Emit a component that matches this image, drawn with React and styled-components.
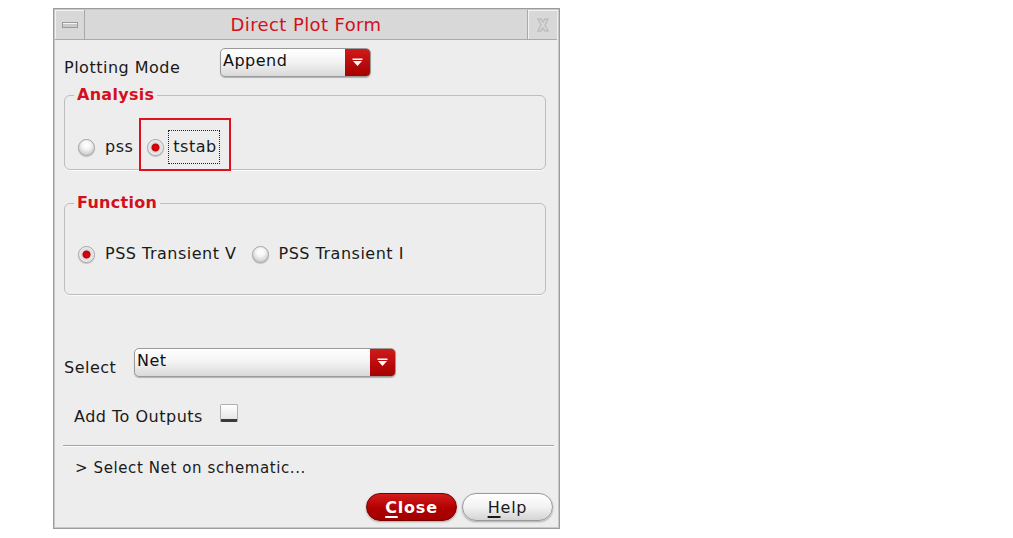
import React from "react";
import styled, { createGlobalStyle } from "styled-components";

const Global = createGlobalStyle`
  html, body { margin: 0; padding: 0; background: #ffffff; }
  body { font-family: "DejaVu Sans", Verdana, sans-serif; }
`;

const Page = styled.div`
  padding: 8px 0 0 53px;
`;

const Window = styled.div`
  width: 507px;
  height: 521px;
  box-sizing: border-box;
  border: 1px solid #9c9c9c;
  box-shadow: inset 0 0 0 1px #c8c8c8;
  background: #ededed;
  display: flex;
  flex-direction: column;
`;

const TitleBar = styled.div`
  display: flex;
  height: 30px;
  margin: 1px 2px 0 1px;
  background: #d8d8d8;
  border-bottom: 1px solid #a9a9a9;
  box-sizing: border-box;
`;

const TitleButton = styled.div`
  width: 29px;
  display: flex;
  align-items: center;
  justify-content: center;
  border-left: ${(p) => (p.$right ? "1px solid #a8a8a8" : "none")};
  border-right: ${(p) => (p.$right ? "none" : "1px solid #a8a8a8")};
  box-shadow: inset 1px 1px 0 #f2f2f2;
`;

const Title = styled.div`
  flex: 1;
  text-align: center;
  color: #d3101c;
  font-size: 18px;
  letter-spacing: 0.4px;
  line-height: 29px;
`;

const Content = styled.div`
  display: flex;
  flex-direction: column;
  padding: 0 3px 0 10px;
  flex: 1;
`;

const FormRow = styled.div`
  display: flex;
  align-items: ${(p) => p.$align || "flex-end"};
  margin-top: ${(p) => p.$mt || 0}px;
  margin-left: ${(p) => p.$ml || 0}px;
`;

const Label = styled.span`
  font-size: 16px;
  letter-spacing: 0.5px;
  color: #1a1a1a;
  width: ${(p) => (p.$w ? `${p.$w}px` : "auto")};
  flex: none;
  line-height: 18px;
`;

const Combo = styled.div`
  width: ${(p) => p.$w}px;
  height: 29px;
  box-sizing: border-box;
  display: flex;
  border: 1px solid #9a9a9a;
  border-radius: 5px;
  overflow: hidden;
  background: linear-gradient(#ffffff 0%, #f4f4f4 45%, #d9d9d9 100%);
  box-shadow: 0 1px 1px rgba(0, 0, 0, 0.25);
`;

const ComboText = styled.span`
  flex: 1;
  font-size: 16px;
  letter-spacing: 0.5px;
  color: #111;
  padding: 2px 0 0 2px;
  line-height: 20px;
`;

const ComboArrow = styled.span`
  width: 25px;
  display: flex;
  align-items: center;
  justify-content: center;
  background: linear-gradient(#d01a1a, #a70000);
`;

const Group = styled.fieldset`
  margin: ${(p) => p.$mt}px 10px 0 0;
  padding: ${(p) => p.$pt}px 0 ${(p) => p.$pb}px 13px;
  border: 1px solid #bdbdbd;
  border-radius: 6px;
  box-shadow: 0 1px 0 #fafafa;
`;

const Legend = styled.legend`
  margin-left: -4px;
  padding: 0 3px;
  color: #d3101c;
  font-weight: bold;
  font-size: 16px;
  letter-spacing: 0.3px;
  line-height: 18px;
`;

const Options = styled.div`
  display: flex;
  align-items: center;
  height: 20px;
`;

const Option = styled.span`
  display: flex;
  align-items: center;
  position: relative;
  margin-right: ${(p) => p.$mr || 0}px;
`;

const Radio = styled.span`
  width: 17px;
  height: 17px;
  box-sizing: border-box;
  border-radius: 50%;
  border: 1px solid #a4a4a4;
  background: ${(p) =>
    p.$on
      ? "radial-gradient(circle at 50% 50%, #e8000c 0, #c6000a 3.5px, #d8d8d8 4.5px, #f4f4f4 8px)"
      : "radial-gradient(circle at 50% 35%, #ffffff 0, #f6f6f6 4px, #d0d0d0 9px)"};
  box-shadow: 0 1px 1px rgba(0, 0, 0, 0.2);
  flex: none;
`;

const OptionText = styled.span`
  font-size: 16px;
  letter-spacing: 0.5px;
  color: #1a1a1a;
  margin-left: ${(p) => p.$ml || 10}px;
  padding: ${(p) => (p.$focus ? "7px 2px 7px 4px" : "0")};
  outline: ${(p) => (p.$focus ? "1px dotted #222" : "none")};
  line-height: 18px;
`;

const Highlight = styled.span`
  position: absolute;
  left: -8px;
  right: -12px;
  top: -13px;
  bottom: -8px;
  border: 2px solid #e0101e;
  pointer-events: none;
`;

const Check = styled.span`
  width: 18px;
  height: 18px;
  box-sizing: border-box;
  margin-left: 17px;
  margin-bottom: 4px;
  border: 1px solid #b0b0b0;
  border-bottom: 3px solid #3a3a3a;
  background: linear-gradient(#ffffff, #e6e6e6);
  border-radius: 2px;
`;

const Separator = styled.div`
  margin: 19px 2px 0 -1px;
  height: 0;
  border-top: 1px solid #a4a4a4;
  border-bottom: 1px solid #fbfbfb;
`;

const Status = styled.div`
  margin: 12px 0 0 11px;
  font-size: 15px;
  letter-spacing: 0.6px;
  color: #1a1a1a;
  line-height: 18px;
`;

const Buttons = styled.div`
  display: flex;
  justify-content: flex-end;
  gap: 5px;
  margin-top: 16px;
  padding-right: 3px;
`;

const Button = styled.button`
  width: 91px;
  height: 28px;
  border-radius: 14px;
  font-family: "DejaVu Sans", Verdana, sans-serif;
  font-size: 16px;
  padding: 0;
  border: 1px solid ${(p) => (p.$primary ? "#7a0000" : "#9a9a9a")};
  color: ${(p) => (p.$primary ? "#ffffff" : "#1a1a1a")};
  font-weight: ${(p) => (p.$primary ? "bold" : "normal")};
  letter-spacing: 0.8px;
  background: ${(p) =>
    p.$primary
      ? "linear-gradient(#d41c1c, #b00000 55%, #a10000)"
      : "linear-gradient(#ffffff, #f2f2f2 50%, #d4d4d4)"};
  box-shadow: 0 1px 2px rgba(0, 0, 0, 0.3);
  u { text-decoration-thickness: 2px; text-underline-offset: 3px; }
`;

const DropArrow = () => (
  <svg width="11" height="9" viewBox="0 0 11 9">
    <rect x="0.5" y="0.5" width="10" height="1.5" fill="#ffffff" />
    <polygon points="1,3 10,3 5.5,8" fill="#ffffff" />
  </svg>
);

const MinIcon = () => (
  <svg width="16" height="6" viewBox="0 0 16 6">
    <rect x="0.5" y="0.5" width="15" height="5" fill="#c9c9c9" stroke="#9a9a9a" />
    <line x1="1" y1="1.5" x2="15" y2="1.5" stroke="#f4f4f4" />
  </svg>
);

const CloseIcon = () => (
  <svg width="16" height="16" viewBox="0 0 16 16" fill="none" stroke="#bdbdbd" strokeWidth="1.4">
    <path d="M3 2 L6 2 L8 5 L10 2 L13 2 L10 8 L13 14 L10 14 L8 11 L6 14 L3 14 L6 8 Z" />
  </svg>
);

export default function App() {
  return (
    <>
      <Global />
      <Page>
        <Window>
          <TitleBar>
            <TitleButton>
              <MinIcon />
            </TitleButton>
            <Title>Direct Plot Form</Title>
            <TitleButton $right>
              <CloseIcon />
            </TitleButton>
          </TitleBar>
          <Content>
            <FormRow $mt={8}>
              <Label $w={156}>Plotting Mode</Label>
              <Combo $w={151}>
                <ComboText>Append</ComboText>
                <ComboArrow>
                  <DropArrow />
                </ComboArrow>
              </Combo>
            </FormRow>

            <Group $mt={9} $pt={33} $pb={12}>
              <Legend>Analysis</Legend>
              <Options>
                <Option $mr={14}>
                  <Radio />
                  <OptionText>pss</OptionText>
                </Option>
                <Option>
                  <Radio $on />
                  <OptionText $ml={5} $focus>tstab</OptionText>
                  <Highlight />
                </Option>
              </Options>
            </Group>

            <Group $mt={24} $pt={32} $pb={30}>
              <Legend>Function</Legend>
              <Options>
                <Option $mr={15}>
                  <Radio $on />
                  <OptionText>PSS Transient V</OptionText>
                </Option>
                <Option>
                  <Radio />
                  <OptionText>PSS Transient I</OptionText>
                </Option>
              </Options>
            </Group>

            <FormRow $mt={53}>
              <Label $w={70}>Select</Label>
              <Combo $w={262}>
                <ComboText>Net</ComboText>
                <ComboArrow>
                  <DropArrow />
                </ComboArrow>
              </Combo>
            </FormRow>

            <FormRow $mt={27} $ml={10}>
              <Label>Add To Outputs</Label>
              <Check />
            </FormRow>

            <Separator />
            <Status>&gt; Select Net on schematic...</Status>

            <Buttons>
              <Button $primary>
                <u>C</u>lose
              </Button>
              <Button>
                <u>H</u>elp
              </Button>
            </Buttons>
          </Content>
        </Window>
      </Page>
    </>
  );
}
